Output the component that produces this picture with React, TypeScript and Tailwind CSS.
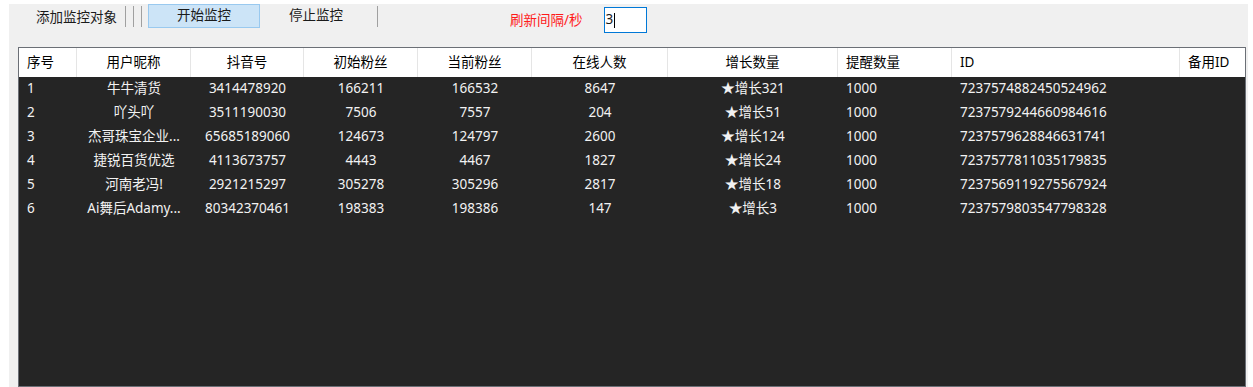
import React from "react";

type Col = { title: string; width: string; align: "left" | "center" };

const columns: Col[] = [
  { title: "序号", width: "w-[58px]", align: "left" },
  { title: "用户昵称", width: "w-[114px]", align: "center" },
  { title: "抖音号", width: "w-[113px]", align: "center" },
  { title: "初始粉丝", width: "w-[114px]", align: "center" },
  { title: "当前粉丝", width: "w-[114px]", align: "center" },
  { title: "在线人数", width: "w-[136px]", align: "center" },
  { title: "增长数量", width: "w-[170px]", align: "center" },
  { title: "提醒数量", width: "w-[114px]", align: "left" },
  { title: "ID", width: "w-[228px]", align: "left" },
  { title: "备用ID", width: "w-[65px]", align: "left" },
];

const rows: string[][] = [
  ["1", "牛牛清货", "3414478920", "166211", "166532", "8647", "★增长321", "1000", "7237574882450524962", ""],
  ["2", "吖头吖", "3511190030", "7506", "7557", "204", "★增长51", "1000", "7237579244660984616", ""],
  ["3", "杰哥珠宝企业...", "65685189060", "124673", "124797", "2600", "★增长124", "1000", "7237579628846631741", ""],
  ["4", "捷锐百货优选", "4113673757", "4443", "4467", "1827", "★增长24", "1000", "7237577811035179835", ""],
  ["5", "河南老冯!", "2921215297", "305278", "305296", "2817", "★增长18", "1000", "7237569119275567924", ""],
  ["6", "Ai舞后Adamy...", "80342370461", "198383", "198386", "147", "★增长3", "1000", "7237579803547798328", ""],
];

const font = "font-['Noto_Sans','Noto_Sans_CJK_SC',sans-serif]";

function Sep() {
  return <div className="mt-[2px] h-[21px] w-px bg-[#a0a0a0]" />;
}

export default function App() {
  return (
    <div className={`h-[387px] w-[1253px] overflow-hidden bg-white pt-[4px] pl-[9px] pr-[5px] ${font} text-[13.5px]`}>
      <div className="flex h-full flex-col bg-[#f0f0f0]">
        {/* toolbar */}
        <div className="flex h-[43px] items-start">
          <div className="ml-[27px] mt-[2px] flex h-[24px] items-center leading-none text-[#1a1a1a]">
            添加监控对象
          </div>
          <div className="ml-[8px] flex gap-[7px]">
            <Sep />
            <Sep />
            <Sep />
          </div>
          <button className="ml-[6px] flex h-[24px] w-[112px] items-center justify-center border border-[#99c9ef] bg-[#cce4f7] leading-none text-[#1a1a1a]">
            开始监控
          </button>
          <button className="flex h-[24px] w-[112px] items-center justify-center leading-none text-[#1a1a1a]">
            停止监控
          </button>
          <div className="ml-[5px] mt-[2px] h-[21px] w-px bg-[#a0a0a0]" />
          <div className="ml-[132px] mt-[4px] flex h-[26px] items-center leading-none text-[#ff1a1a]">
            刷新间隔/秒
          </div>
          <div className="ml-[21px] mt-[3px] flex h-[26px] w-[43px] items-center border border-[#0078d7] bg-white pl-[1px] leading-none text-[#1a1a1a]">
            3<span className="ml-px h-[15px] w-px bg-black" />
          </div>
        </div>

        {/* list */}
        <div className="ml-[9px] mr-[2px] flex flex-1 flex-col border border-[#6b6f76] bg-[#252525]">
          <div className="flex h-[29px] bg-white text-black">
            {columns.map((c, i) => (
              <div
                key={c.title}
                className={`${c.width} flex h-full shrink-0 items-center leading-none ${
                  c.align === "center" ? "justify-center" : "pl-[8px]"
                } ${i < columns.length - 1 ? "border-r border-[#e5e5e5]" : ""}`}
              >
                {c.title}
              </div>
            ))}
          </div>
          {rows.map((r) => (
            <div key={r[0]} className="flex h-[24px] text-[#f2f2f2]">
              {r.map((cell, i) => (
                <div
                  key={i}
                  className={`${columns[i].width} flex shrink-0 items-center whitespace-nowrap leading-none ${
                    columns[i].align === "center" ? "justify-center" : "pl-[8px]"
                  }`}
                >
                  {cell}
                </div>
              ))}
            </div>
          ))}
        </div>
      </div>
    </div>
  );
}
